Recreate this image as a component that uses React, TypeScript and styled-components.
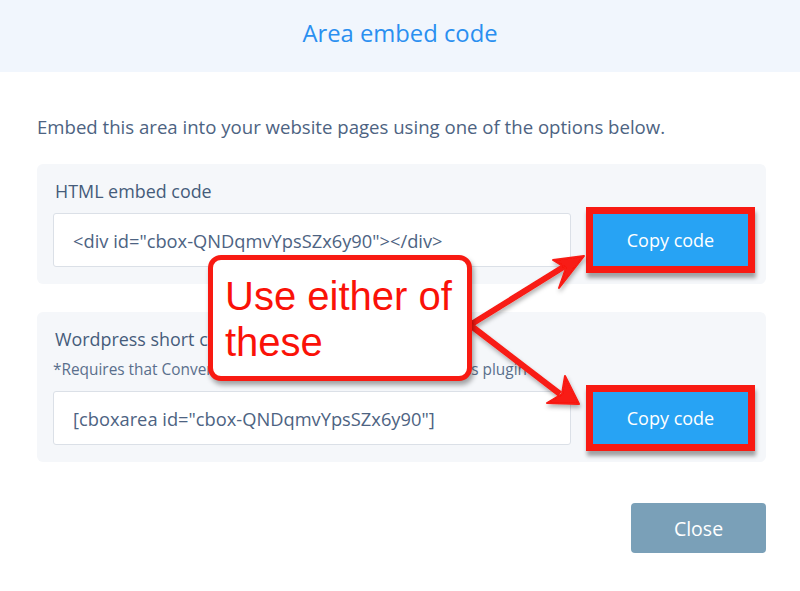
import React from "react";
import styled, { createGlobalStyle } from "styled-components";

const GlobalStyle = createGlobalStyle`
  html, body {
    margin: 0;
    padding: 0;
    background: #ffffff;
  }
  body {
    font-family: "Open Sans", "Liberation Sans", Arial, sans-serif;
  }
`;

const Page = styled.div`
  position: relative;
  width: 800px;
  height: 591px;
  overflow: hidden;
  background: #ffffff;
`;

const Header = styled.div`
  height: 72px;
  box-sizing: border-box;
  padding-bottom: 7px;
  background: #f1f6fd;
  display: flex;
  align-items: center;
  justify-content: center;
  h1 {
    margin: 0;
    font-size: 23.8px;
    font-weight: 400;
    color: #2a8ff0;
  }
`;

const Body = styled.div`
  padding: 0 34px 0 37px;
  display: flex;
  flex-direction: column;
`;

const Intro = styled.p`
  margin: 44px 0 0;
  font-size: 18.6px;
  line-height: 22px;
  color: #4d6382;
  white-space: nowrap;
`;

const Card = styled.div<{ $top: number }>`
  margin-top: ${(p) => p.$top}px;
  background: #f5f7fa;
  border-radius: 6px;
  padding: 17px 18px 17px 16px;
`;

const Label = styled.div`
  font-size: 17.9px;
  line-height: 20px;
  color: #455c7b;
  margin: 0 0 12px 2px;
`;

const Note = styled.div`
  font-size: 15.4px;
  line-height: 18px;
  color: #5a6f8c;
  margin: 2px 0 12px 0;
  white-space: nowrap;
`;

const Row = styled.div`
  display: flex;
  align-items: center;
  gap: 22px;
`;

const CodeField = styled.div`
  flex: 0 0 518px;
  height: 54px;
  box-sizing: border-box;
  background: #ffffff;
  border: 1px solid #dbe0e7;
  border-radius: 3px;
  display: flex;
  align-items: center;
  padding-left: 19px;
  font-size: 18.3px;
  color: #4d6382;
  white-space: nowrap;
`;

const CopyButton = styled.button<{ $marked?: boolean }>`
  flex: 0 0 155px;
  height: 52px;
  border: none;
  border-radius: 0;
  background: #27a3f4;
  color: #ffffff;
  font-family: inherit;
  font-size: 18px;
  box-shadow: ${(p) =>
    p.$marked ? "0 0 0 7px #f81a12, 1px 5px 4px 7px rgba(0,0,0,0.35)" : "none"};
`;

const Footer = styled.div`
  display: flex;
  justify-content: flex-end;
  margin-top: 41px;
`;

const CloseButton = styled.button`
  width: 135px;
  height: 50px;
  border: none;
  border-radius: 4px;
  background: #7aa0b8;
  color: #ffffff;
  font-family: inherit;
  font-size: 19.5px;
`;

const Callout = styled.div`
  position: absolute;
  left: 208px;
  top: 255px;
  width: 264px;
  height: 126px;
  box-sizing: border-box;
  border: 5px solid #f81a12;
  border-radius: 13px;
  background: #ffffff;
  box-shadow: 2px 4px 5px rgba(0, 0, 0, 0.35);
  padding: 13px 0 0 12px;
  font-family: "Liberation Sans", Arial, sans-serif;
  font-size: 40px;
  line-height: 46px;
  color: #fa1208;
`;

const Arrows = styled.svg`
  position: absolute;
  left: 0;
  top: 0;
  pointer-events: none;
`;

const ArrowLayer = () => (
  <Arrows width="800" height="591" viewBox="0 0 800 591">
    <defs>
      <filter id="sh" x="-20%" y="-20%" width="140%" height="140%">
        <feDropShadow dx="1" dy="3" stdDeviation="2" floodColor="#000" floodOpacity="0.3" />
      </filter>
    </defs>
    <g filter="url(#sh)" fill="#f81a12" stroke="#f81a12" strokeLinejoin="round">
      <line x1="470" y1="325" x2="565" y2="266" strokeWidth="6" />
      <polygon points="584,256 559,288 566,268 553,260" strokeWidth="2" />
      <line x1="470" y1="325" x2="560" y2="394" strokeWidth="6" />
      <polygon points="579,404 547,403 562,394 565,376" strokeWidth="2" />
    </g>
  </Arrows>
);

export default function App() {
  return (
    <Page>
      <GlobalStyle />
      <Header>
        <h1>Area embed code</h1>
      </Header>
      <Body>
        <Intro>Embed this area into your website pages using one of the options below.</Intro>
        <Card $top={26}>
          <Label>HTML embed code</Label>
          <Row>
            <CodeField>&lt;div id="cbox-QNDqmvYpsSZx6y90"&gt;&lt;/div&gt;</CodeField>
            <CopyButton $marked>Copy code</CopyButton>
          </Row>
        </Card>
        <Card $top={28}>
          <Label>Wordpress short code</Label>
          <Note>*Requires that ConvertBox is installed using our WordPress plugin</Note>
          <Row>
            <CodeField>[cboxarea id="cbox-QNDqmvYpsSZx6y90"]</CodeField>
            <CopyButton $marked>Copy code</CopyButton>
          </Row>
        </Card>
        <Footer>
          <CloseButton>Close</CloseButton>
        </Footer>
      </Body>
      <ArrowLayer />
      <Callout>
        Use either of
        <br />
        these
      </Callout>
    </Page>
  );
}
